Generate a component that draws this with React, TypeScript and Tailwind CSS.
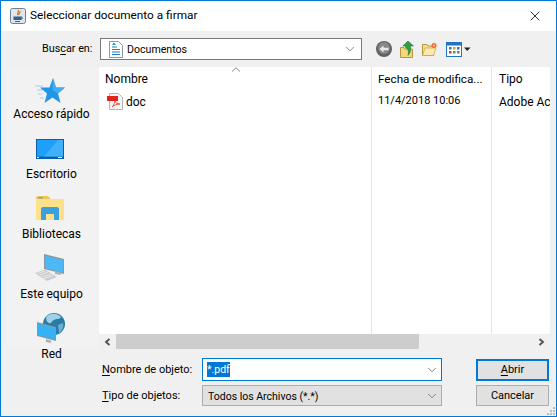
import { ChevronDown, X } from "lucide-react";
import type { ReactNode } from "react";

function JavaIcon() {
  return (
    <svg width="16" height="16" viewBox="0 0 16 16">
      <rect x="0.5" y="0.5" width="15" height="15" rx="2" fill="#dfe6ee" stroke="#6f7f91" />
      <path d="M8 2c2 2-2 3 0 5M10 3c1 2-2 2-1 4" fill="none" stroke="#d9731f" strokeWidth="1.2" />
      <path d="M4 9h7v1.500H4zM3.500 11.500h8M5 13.500h5" stroke="#35618f" strokeWidth="1.100" fill="#35618f" />
      <path d="M11 9c2 0 2 2 0 2" fill="none" stroke="#35618f" />
    </svg>
  );
}

function DocsIcon() {
  return (
    <svg width="14" height="17" viewBox="0 0 14 17">
      <path d="M0.500 0.500H9.500L13.500 4.500V16.500H0.500Z" fill="#fff" stroke="#8b97a5" />
      <path d="M3 6h5M3 8.500h8M3 11h8M3 13.500h8" stroke="#1d7fc5" strokeWidth="1.200" />
      <path d="M5 1.500L3 4h4z" fill="#2a9a8f" />
    </svg>
  );
}

function PdfIcon() {
  return (
    <svg width="16" height="17" viewBox="0 0 16 17">
      <path d="M2.500 0.500H11.500L15.500 4.500V16.500H2.500Z" fill="#f4f4f4" stroke="#b5b5b5" />
      <rect x="0" y="3" width="11" height="5" fill="#e2231a" />
      <path d="M5 14c2-2 3-5 3-6 1 2 2 3 5 3-3 0-6 1-8 3z" fill="none" stroke="#e2574c" strokeWidth="1" />
    </svg>
  );
}

function BackIcon() {
  return (
    <svg width="16" height="16" viewBox="0 0 16 16">
      <circle cx="8" cy="8" r="8" fill="#5d6064" />
      <circle cx="8" cy="7" r="6" fill="#85888c" />
      <path d="M3.500 8L7.500 4.500V6.800H12.500V9.200H7.500V11.500Z" fill="#e8e8e8" />
    </svg>
  );
}

function UpFolderIcon() {
  return (
    <svg width="14" height="17" viewBox="0 0 14 17">
      <path d="M0.500 6.500H4L5 8H12.500V16.500H0.500Z" fill="#f3d77f" stroke="#b8963c" />
      <path d="M8 0L13.500 5H10.500C11 9 10.500 12 8 14.500C9 11 8.500 8 5.500 6.500V5H2.800Z" fill="#2f9e3f" stroke="#17702a" strokeWidth="0.500" />
    </svg>
  );
}

function NewFolderIcon() {
  return (
    <svg width="15" height="13" viewBox="0 0 15 13">
      <path d="M0.500 1.500H5L6 3H11.500V12.500H0.500Z" fill="#f6dc8e" stroke="#b8963c" />
      <path d="M3 5H14L11.500 12.500H0.500Z" fill="#fbe9ae" stroke="#c4a44c" strokeWidth="0.700" />
      <circle cx="12" cy="2.500" r="2.500" fill="#ef6a2e" />
      <circle cx="12" cy="2.500" r="1" fill="#ffd9b0" />
    </svg>
  );
}

function ViewIcon() {
  return (
    <svg width="25" height="15" viewBox="0 0 25 15" className="ml-[1px]">
      <rect x="0.500" y="0.500" width="15" height="14" fill="#fff" stroke="#1f73c9" />
      <rect x="1" y="1" width="14" height="2.500" fill="#1f73c9" />
      <rect x="3" y="5" width="2.500" height="2.500" fill="#3f6fb5" />
      <rect x="7" y="5" width="2.500" height="2.500" fill="#e09a2d" />
      <rect x="11" y="5" width="2.500" height="2.500" fill="#3f6fb5" />
      <rect x="3" y="9" width="2.500" height="2.500" fill="#c6432f" />
      <rect x="7" y="9" width="2.500" height="2.500" fill="#4b9e4b" />
      <rect x="11" y="9" width="2.500" height="2.500" fill="#7a7a7a" />
      <path d="M18 5.500H24.500L21.250 9Z" fill="#222" />
    </svg>
  );
}

function StarIcon() {
  return (
    <svg width="30" height="28" viewBox="0 -2 30 28">
      <path d="M0 8H8M2 12H8M3 16H7M5 20H9" stroke="#9fd0f3" strokeWidth="1" />
      <path d="M18 0L21 9.500L30 9.500L23 15.500L25.500 25L17.500 19.500L9.500 25L12 15.500L5 9.500L14.500 9.500Z" fill="#2196e8" />
      <path d="M18 0L21 9.500L30 9.500L23 15.500L17.500 12Z" fill="#45aef2" />
    </svg>
  );
}

function DesktopIcon() {
  return (
    <svg width="28" height="20" viewBox="0 0 28 20">
      <rect width="28" height="20" fill="#0a5fa8" />
      <rect x="1" y="1" width="26" height="16.500" fill="#1ea0fa" />
      <path d="M8 17.500L22 1H27V17.500Z" fill="#3fb0fb" />
      <rect x="22" y="18" width="4" height="1" fill="#e8f3fb" />
      <rect x="1" y="18" width="2" height="1" fill="#e8f3fb" />
    </svg>
  );
}

function LibraryIcon() {
  return (
    <svg width="28" height="24" viewBox="0 0 28 24">
      <path d="M0 2C0 1 1 0 2 0H12L14 2V3H0Z" fill="#f3c54b" />
      <rect x="2" y="1" width="5" height="1.500" fill="#56b4ea" />
      <rect x="0" y="3" width="28" height="21" rx="1" fill="#fde08a" />
      <path d="M5 24V13C5 12 6 11 7 11H21C22 11 23 12 23 13V24H18V18H10V24Z" fill="#3b9fe0" />
    </svg>
  );
}

function ComputerIcon() {
  return (
    <svg width="32" height="28" viewBox="0 0 32 28">
      <path d="M11 1L31 6V21L11 16Z" fill="#8b969e" />
      <path d="M12 2.500L30 7V19.500L12 15Z" fill="#4cb8f5" />
      <path d="M22 18L28 19.500V22L22 21Z" fill="#aab3ba" />
      <path d="M2 20L12 16.500L24 24L14 28Z" fill="#c9cdd1" />
      <path d="M5 20.500L12 18M7 22L15 19M9 24L18 21M11 25.500L20 22.500" stroke="#f1f2f3" strokeWidth="0.800" />
    </svg>
  );
}

function NetworkIcon() {
  return (
    <svg width="28" height="31" viewBox="0 0 28 31">
      <circle cx="17" cy="11" r="11" fill="#2a7ba6" />
      <path d="M10 3C14 0 20 0 24 4C22 7 20 5 17 7C14 8 15 11 12 10C10 9 8 6 10 3Z" fill="#9fd2e8" />
      <path d="M21 12L26 10C27 14 25 18 22 20Z" fill="#6db0cf" />
      <path d="M0 9L19 14V28L0 23Z" fill="#8b969e" />
      <path d="M1 10.500L18 15V26.500L1 22Z" fill="#35b2f6" />
      <path d="M9 26L14 27.500V30L9 29Z" fill="#aab3ba" />
    </svg>
  );
}

function Place({ icon, label, iconClass }: { icon: ReactNode; label: string; iconClass: string }) {
  return (
    <div className="flex h-[60px] flex-col items-center">
      <div className={"flex h-[37px] items-end " + iconClass}>{icon}</div>
      <span className="mt-[3px] whitespace-nowrap pr-[2px] text-[12px] leading-[15px]">{label}</span>
    </div>
  );
}

function U({ children }: { children: ReactNode }) {
  return <span className="underline underline-offset-2">{children}</span>;
}

export default function App() {
  return (
    <div
      className="flex h-[417px] w-[557px] flex-col border border-[#0078d7] bg-[#f0f0f0] text-[11px] text-black"
      style={{ fontFamily: 'Roboto, "Noto Sans", sans-serif' }}
    >
      {/* Title bar */}
      <div className="flex h-[30px] items-center bg-white pl-[9px] pr-[13px]">
        <JavaIcon />
        <span className="ml-[4px] whitespace-nowrap text-[11.800px]">Seleccionar documento a firmar</span>
        <X size={16} strokeWidth={1.2} className="ml-auto" />
      </div>

      {/* Toolbar */}
      <div className="flex h-[36px] items-center">
        <span className="ml-[41px] w-[58px] whitespace-nowrap pt-[1px] text-[10.800px]">
          Bus<U>c</U>ar en:
        </span>
        <div className="flex h-[22px] w-[262px] items-center border border-[#7a7a7a] bg-white pl-[8px] pr-[4px]">
          <DocsIcon />
          <span className="ml-[4px] pt-[1px] text-[10.600px]">Documentos</span>
          <ChevronDown size={14} strokeWidth={1.2} className="ml-auto text-[#555]" />
        </div>
        <div className="ml-[14px] flex items-center gap-[8px]">
          <BackIcon />
          <UpFolderIcon />
          <NewFolderIcon />
          <ViewIcon />
        </div>
      </div>

      {/* Middle */}
      <div className="flex h-[282px] pl-[6px] pr-[6px]">
        <div className="w-[92px] bg-[#f2f2f2]">
          <Place icon={<StarIcon />} label="Acceso rápido" iconClass="pr-[6px]" />
          <Place icon={<DesktopIcon />} label="Escritorio" iconClass="pb-[5px] pr-[5px]" />
          <Place icon={<LibraryIcon />} label="Bibliotecas" iconClass="pb-[4px] pr-[5px]" />
          <Place icon={<ComputerIcon />} label="Este equipo" iconClass="pb-[3px] pr-[8px]" />
          <Place icon={<NetworkIcon />} label="Red" iconClass="pr-[4px]" />
        </div>
        <div className="ml-[1px] flex w-[451px] flex-col">
          <div className="relative flex h-[267px] bg-white">
            <svg width="10" height="5" viewBox="0 0 10 5" className="absolute left-[132px] top-0">
              <path d="M1 4.500L5 0.800L9 4.500" fill="none" stroke="#8a8a8a" />
            </svg>
            <div className="w-[273px] border-r border-[#e5e5e5] pl-[6px]">
              <div className="flex h-[20px] items-end text-[12px] leading-[15px]">Nombre</div>
              <div className="mt-[6px] flex h-[17px] items-center gap-[3px] pl-[2px]">
                <PdfIcon />
                <span className="text-[12px]">doc</span>
              </div>
            </div>
            <div className="w-[120px] border-r border-[#e5e5e5] pl-[6px]">
              <div className="flex h-[20px] items-end whitespace-nowrap text-[11.700px] leading-[15px]">Fecha de modifica...</div>
              <div className="mt-[6px] flex h-[17px] items-center text-[11px]">11/4/2018 10:06</div>
            </div>
            <div className="min-w-0 flex-1 overflow-hidden whitespace-nowrap pl-[7px]">
              <div className="flex h-[20px] items-end text-[12px] leading-[15px]">Tipo</div>
              <div className="mt-[6px] flex h-[17px] items-center text-[12px]">Adobe Ac</div>
            </div>
          </div>
          {/* Horizontal scrollbar */}
          <div className="flex h-[15px]">
            <div className="flex w-[17px] items-center justify-center">
              <svg width="7" height="8" viewBox="0 0 7 8">
                <path d="M5.500 1L2 4L5.500 7" fill="none" stroke="#505050" strokeWidth="1.800" />
              </svg>
            </div>
            <div className="w-[303px] bg-[#cdcdcd]" />
            <div className="flex-1" />
            <div className="flex w-[17px] items-center justify-center">
              <svg width="7" height="8" viewBox="0 0 7 8">
                <path d="M1.500 1L5 4L1.500 7" fill="none" stroke="#505050" strokeWidth="1.800" />
              </svg>
            </div>
          </div>
        </div>
      </div>

      {/* Name and type rows */}
      <div className="relative flex flex-1 flex-col pl-[101px] pt-[9px]">
        <div className="flex h-[23px] items-center">
          <span className="w-[100px] whitespace-nowrap pt-[2px] text-[11px]">
            <U>N</U>ombre de objeto:
          </span>
          <div className="flex h-[23px] w-[240px] items-center border border-[#0078d7] bg-white pl-[4px] pr-[2px]">
            <span className="bg-[#0078d7] text-[10.500px] leading-[15px] text-white">*.pdf</span>
            <ChevronDown size={14} strokeWidth={1.2} className="ml-auto text-[#555]" />
          </div>
          <button className="ml-[34px] flex h-[22px] w-[73px] items-center justify-center border-2 border-[#0078d7] bg-[#e1e1e1] pt-[1px] text-[11px]">
            <span><U>A</U>brir</span>
          </button>
        </div>
        <div className="mt-[4px] flex h-[21px] items-center">
          <span className="w-[100px] whitespace-nowrap pt-[2px] text-[11px]">
            <U>T</U>ipo de objetos:
          </span>
          <div className="flex h-[21px] w-[240px] items-center border border-[#adadad] bg-[#e1e1e1] pl-[5px] pr-[2px]">
            <span className="pt-[2px] text-[10.500px]">Todos los Archivos (*.*)</span>
            <ChevronDown size={14} strokeWidth={1.2} className="ml-auto text-[#555]" />
          </div>
          <button className="ml-[34px] flex h-[21px] w-[73px] items-center justify-center border border-[#adadad] bg-[#e1e1e1] pt-[2px] text-[11px]">
            Cancelar
          </button>
        </div>
        <svg width="10" height="10" viewBox="0 0 10 10" className="absolute bottom-0 right-0">
          <path d="M7 1h2v2H7zM4 4h2v2H4zM7 4h2v2H7zM1 7h2v2H1zM4 7h2v2H4zM7 7h2v2H7z" fill="#bdbdbd" />
        </svg>
      </div>
    </div>
  );
}
